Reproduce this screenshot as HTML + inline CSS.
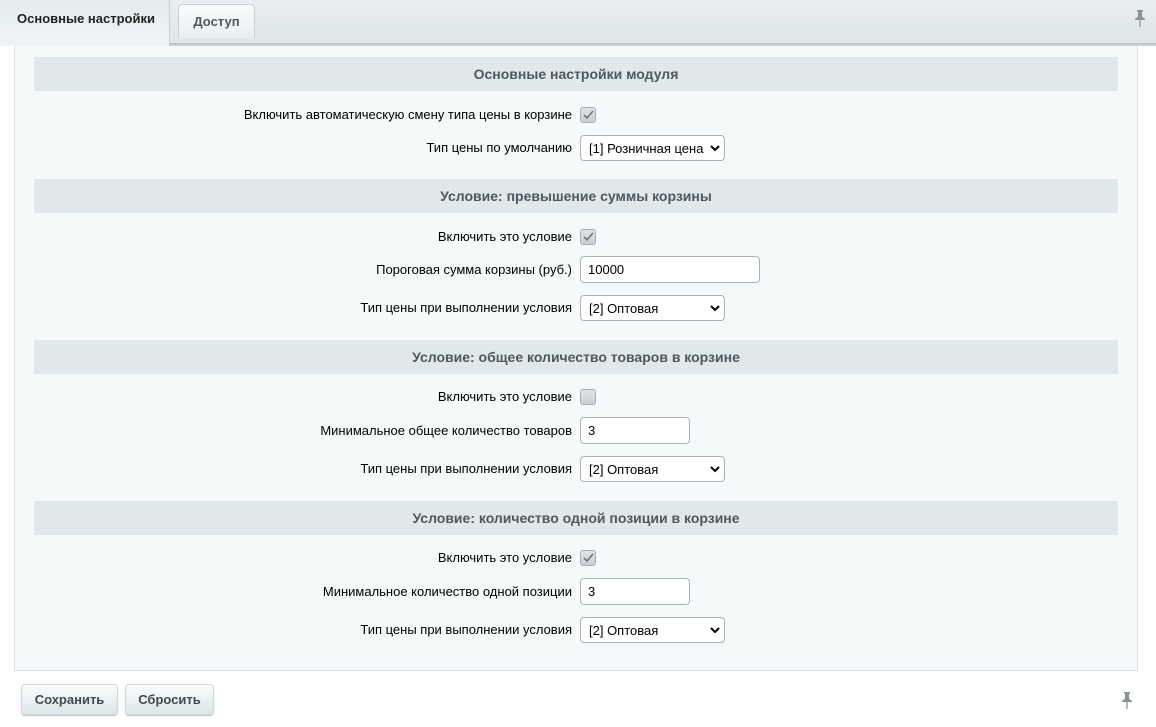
<!DOCTYPE html>
<html><head><meta charset="utf-8"><style>
*{box-sizing:border-box}
body{margin:0;width:1156px;height:727px;background:#fff;font-family:"Liberation Sans",Arial,sans-serif;font-size:13px;color:#000;position:relative;overflow:hidden}
.a{position:absolute}
#top{left:0;top:0;width:1156px;height:44px;background:linear-gradient(#e9eef0,#dfe6e8);border-bottom:1px solid #b9c3c6}
#topl{left:0;top:44px;width:1156px;height:2px;background:#c7d0d3}
.tab1{left:0;top:0;width:170px;height:46px;background:linear-gradient(#e4ebed,#f0f5f6);border-right:1px solid #c3cdd0;font-weight:bold;font-size:13px;color:#222;padding-top:11px;padding-left:17px;z-index:2}
.tab2{left:178px;top:4px;width:77px;height:34px;background:linear-gradient(#fafbfb,#e9eff0);border:1px solid #c8d1d4;border-bottom:none;border-radius:4px 4px 0 0;font-weight:bold;color:#4a5a5e;padding-top:9px;text-align:center}
#cont{left:14px;top:46px;width:1124px;height:625px;background:#f5f9f9;border:1px solid #d7e3e8;border-top:none}
.h{left:34px;width:1084px;height:34px;background:#e0e8ea;font-weight:bold;font-size:14px;color:#4b5a5f;text-align:center;line-height:34px}
.l{right:584px;text-align:right;white-space:nowrap;line-height:16px}
.cb{left:580px;width:16px;height:16px;border:1px solid #a8b0b2;border-radius:3px;background:linear-gradient(#dfe3e4,#c9cecf)}
.cb svg{position:absolute;left:2px;top:2px}
.in{left:580px;height:27px;background:#fff;border:1px solid #a9b4b8;border-radius:4px;padding:5px 7px;line-height:15px}
.sel{left:580px;height:26px;width:145px;background:#fff;border:1px solid #a9b4b8;border-radius:4px;padding:5px 8px;line-height:15px}
.sel svg{position:absolute;right:4px;top:9px}
.btn{top:684px;height:31px;border:1px solid #d3dadc;border-radius:4px;background:linear-gradient(#fbfcfc,#dde5e8);box-shadow:0 1px 1px #b5c0c3;font-weight:bold;color:#3e4b50;text-align:center;line-height:29px}
</style></head><body>
<div id="top" class="a"></div>
<div id="topl" class="a"></div>
<div class="a tab1">Основные настройки</div>
<div class="a tab2">Доступ</div>
<svg class="a" style="left:1134px;top:10px" width="12" height="17" viewBox="0 0 12 17"><path d="M3 0h6v1.5H8v5l3 2.5v1H1V9l3-2.5v-5H3z" fill="#8a9497"/><path d="M6 10v7" stroke="#8a9497" stroke-width="1.2"/></svg>
<div id="cont" class="a"></div>

<div class="a h" style="top:57px">Основные настройки модуля</div>
<div class="a l" style="top:107px">Включить автоматическую смену типа цены в корзине</div>
<div class="a cb" style="top:107px"><svg width="11" height="10"><path d="M1 5l3 3 6-7" stroke="#6b7476" stroke-width="1.6" fill="none"/></svg></div>
<div class="a l" style="top:140px">Тип цены по умолчанию</div>
<div class="a sel" style="top:135px"><span style="color:#000">[1] Розничная цена</span><svg width="10" height="7"><path d="M1 1l4 4 4-4" stroke="#000" stroke-width="2" fill="none"/></svg></div>

<div class="a h" style="top:179px">Условие: превышение суммы корзины</div>
<div class="a l" style="top:229px">Включить это условие</div>
<div class="a cb" style="top:229px"><svg width="11" height="10"><path d="M1 5l3 3 6-7" stroke="#6b7476" stroke-width="1.6" fill="none"/></svg></div>
<div class="a l" style="top:262px">Пороговая сумма корзины (руб.)</div>
<div class="a in" style="top:256px;width:180px">10000</div>
<div class="a l" style="top:300px">Тип цены при выполнении условия</div>
<div class="a sel" style="top:295px">[2] Оптовая<svg width="10" height="7"><path d="M1 1l4 4 4-4" stroke="#000" stroke-width="2" fill="none"/></svg></div>

<div class="a h" style="top:340px">Условие: общее количество товаров в корзине</div>
<div class="a l" style="top:389px">Включить это условие</div>
<div class="a cb" style="top:389px"></div>
<div class="a l" style="top:423px">Минимальное общее количество товаров</div>
<div class="a in" style="top:417px;width:110px">3</div>
<div class="a l" style="top:461px">Тип цены при выполнении условия</div>
<div class="a sel" style="top:456px">[2] Оптовая<svg width="10" height="7"><path d="M1 1l4 4 4-4" stroke="#000" stroke-width="2" fill="none"/></svg></div>

<div class="a h" style="top:501px">Условие: количество одной позиции в корзине</div>
<div class="a l" style="top:550px">Включить это условие</div>
<div class="a cb" style="top:550px"><svg width="11" height="10"><path d="M1 5l3 3 6-7" stroke="#6b7476" stroke-width="1.6" fill="none"/></svg></div>
<div class="a l" style="top:584px">Минимальное количество одной позиции</div>
<div class="a in" style="top:578px;width:110px">3</div>
<div class="a l" style="top:622px">Тип цены при выполнении условия</div>
<div class="a sel" style="top:617px">[2] Оптовая<svg width="10" height="7"><path d="M1 1l4 4 4-4" stroke="#000" stroke-width="2" fill="none"/></svg></div>

<div class="a btn" style="left:21px;width:97px">Сохранить</div>
<div class="a btn" style="left:125px;width:89px">Сбросить</div>
<svg class="a" style="left:1121px;top:692px" width="12" height="17" viewBox="0 0 12 17"><path d="M3 0h6v1.5H8v5l3 2.5v1H1V9l3-2.5v-5H3z" fill="#8a9497"/><path d="M6 10v7" stroke="#8a9497" stroke-width="1.2"/></svg>
</body></html>
